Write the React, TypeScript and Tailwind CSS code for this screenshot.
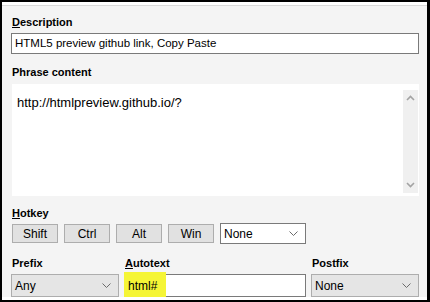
import type { ReactNode } from "react";

const font = { fontFamily: '"Liberation Sans", Arial, sans-serif' };

function Label({ children, className = "" }: { children: ReactNode; className?: string }) {
	return <div className={`h-4 text-[11px] leading-4 font-bold text-black ${className}`}>{children}</div>;
}

function Chevron({ className = "" }: { className?: string }) {
	return (
		<svg width="9" height="5" viewBox="0 0 9 5" className={className}>
			<path d="M0.5 0.5 L4.5 4.5 L8.5 0.5" fill="none" stroke="#6b6b6b" strokeWidth="1" />
		</svg>
	);
}

function Select({ value, className = "" }: { value: string; className?: string }) {
	return (
		<div className={`flex items-center justify-between pl-[3px] pr-[7px] text-[12px] text-black ${className}`}>
			<span>{value}</span>
			<Chevron />
		</div>
	);
}

function KeyButton({ label }: { label: string }) {
	return (
		<button className="flex h-[19px] w-[46px] items-center justify-center border border-[#adadad] bg-[#e1e1e1] text-[12px] text-black">
			{label}
		</button>
	);
}

export default function App() {
	return (
		<div style={font} className="h-[302px] w-[430px] border-t-2 border-r-[3px] border-b-2 border-l-2 border-black bg-white">
			<div className="mt-[3px] flex h-[292px] flex-col border-t border-[#dadada] bg-[#f4f4f4] pr-[8px] pl-[9px]">
				<Label className="mt-[8px] ml-[1px]">
					<span className="underline">D</span>escription
				</Label>
				<div className="mt-[3px] flex h-[21px] items-center border border-[#7a7a7a] bg-white pl-[3px] text-[11.5px] text-black">
					HTML5 preview github link, Copy Paste
				</div>
				<Label className="mt-[10px] ml-[1px]">Phrase content</Label>
				<div className="mt-[4px] ml-[1px] flex h-[115px] bg-white">
					<div className="flex-1 pt-[9px] pl-[5px] text-[13px] text-black">http://htmlpreview.github.io/?</div>
					<div className="mt-[6px] mr-[1px] mb-[3px] flex w-[15px] flex-col items-center justify-between bg-[#f0f0f0] py-[5px]">
						<svg width="9" height="6" viewBox="0 0 9 6">
							<path d="M1 5 L4.5 1.5 L8 5" fill="none" stroke="#a3a3a3" strokeWidth="1.6" />
						</svg>
						<svg width="9" height="6" viewBox="0 0 9 6">
							<path d="M1 1 L4.5 4.5 L8 1" fill="none" stroke="#a3a3a3" strokeWidth="1.6" />
						</svg>
					</div>
				</div>
				<Label className="mt-[9px] ml-[1px]">
					<span className="underline">H</span>otkey
				</Label>
				<div className="mt-[2px] ml-[1px] flex h-[21px] items-center gap-[6px]">
					<KeyButton label="Shift" />
					<KeyButton label="Ctrl" />
					<KeyButton label="Alt" />
					<KeyButton label="Win" />
					<Select value="None" className="h-[21px] w-[86px] border border-[#7a7a7a] bg-white" />
				</div>
				<div className="mt-[11px] flex gap-[5px]">
					<div className="flex w-[108px] flex-col">
						<Label className="ml-[1px]">Prefix</Label>
						<Select value="Any" className="mt-[3px] h-[23px] border border-[#adadad] bg-[#e5e5e5]" />
					</div>
					<div className="flex w-[182px] flex-col">
						<Label className="ml-[1px]">
							<span className="underline">A</span>utotext
						</Label>
						<div className="relative mt-[3px] flex h-[23px] items-center border border-[#7a7a7a] bg-white pl-[3px] text-[12px] text-black">
							<div className="absolute top-[-3px] left-[-1px] h-[25px] w-[42px] bg-[#f5f536]" />
							<span className="relative">html#</span>
						</div>
					</div>
					<div className="flex w-[108px] flex-col">
						<Label className="ml-[1px]">Postfix</Label>
						<Select value="None" className="mt-[3px] h-[23px] border border-[#adadad] bg-[#e5e5e5]" />
					</div>
				</div>
			</div>
		</div>
	);
}
